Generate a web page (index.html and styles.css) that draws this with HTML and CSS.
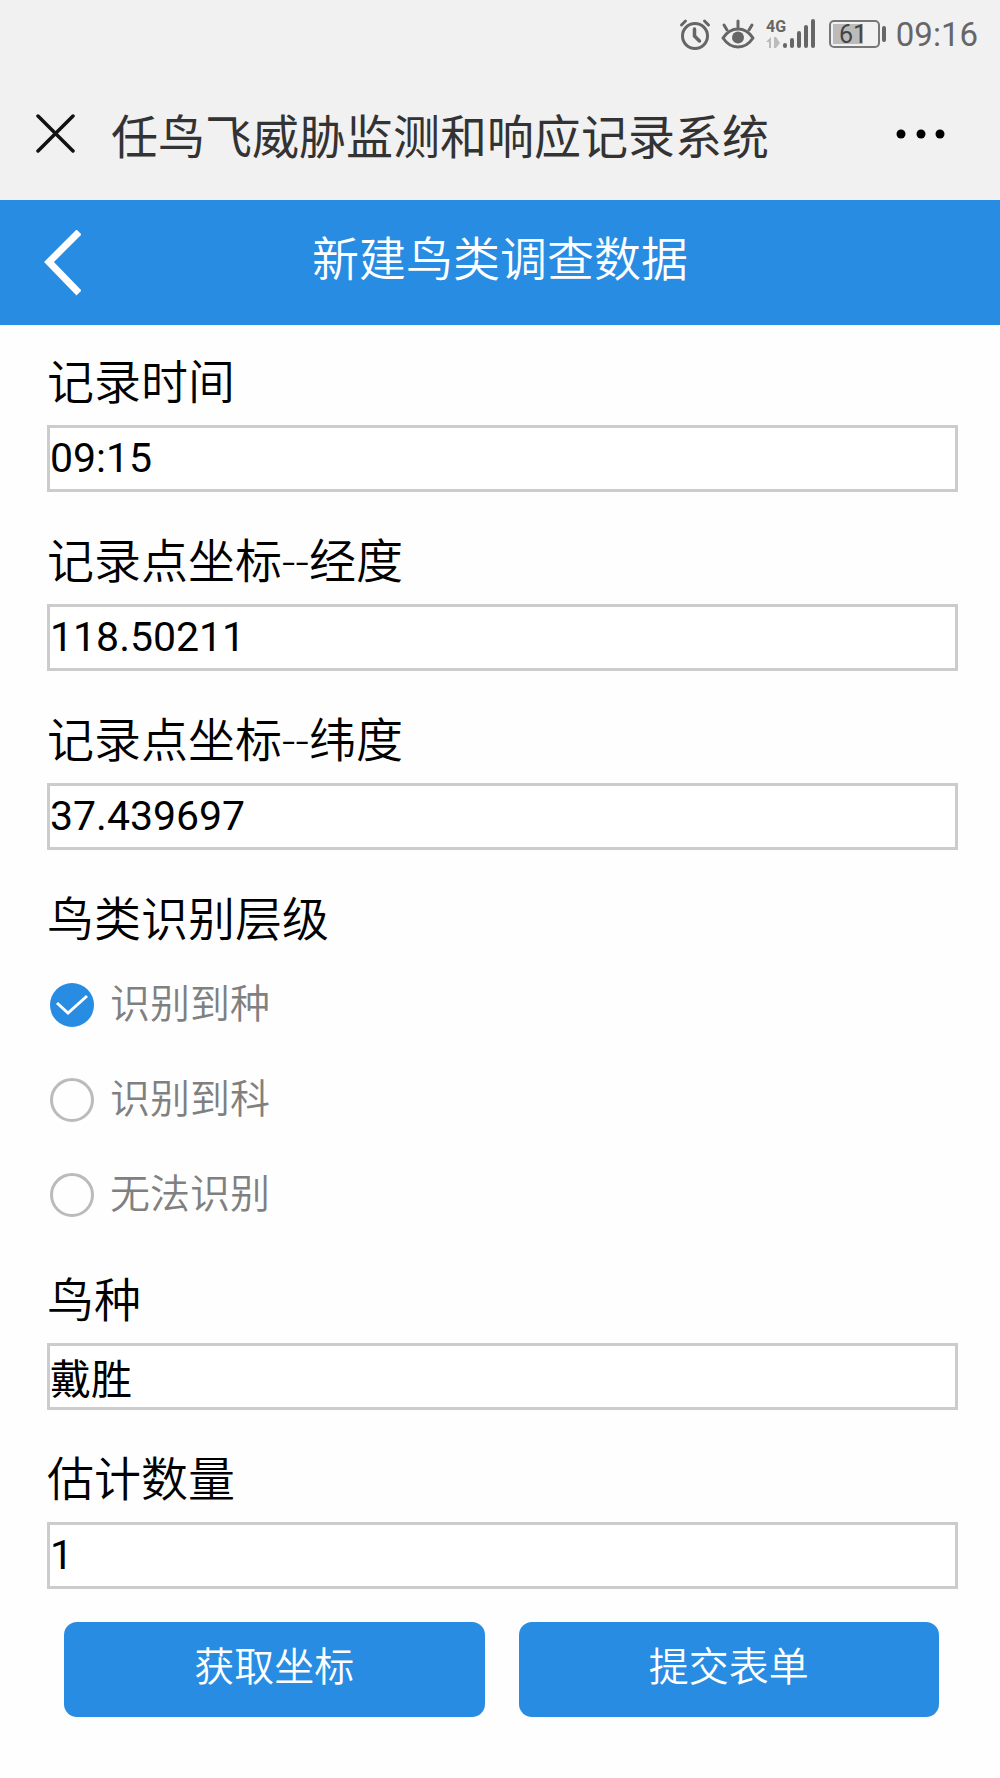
FILE: index.html
```html
<!DOCTYPE html>
<html lang="zh-CN">
<head>
  <meta charset="utf-8">
  <meta name="viewport" content="width=device-width, initial-scale=1">
  <title>任鸟飞威胁监测和响应记录系统</title>
  <link rel="stylesheet" href="styles.css">
</head>
<body>

<!-- status bar -->
<div class="status-bar">
  <svg class="alarm" width="32" height="32" viewBox="0 0 32 32" fill="none" stroke="#666" stroke-width="3" stroke-linecap="round">
    <circle cx="16" cy="18" r="12.5"/>
    <path d="M15.500 11v7l5 5" stroke-width="3.500"/>
    <path d="M2.500 7l4-4M29.500 7l-4-4"/>
  </svg>
  <svg class="eye" width="34" height="32" viewBox="0 0 34 32" fill="none" stroke="#666" stroke-width="3" stroke-linecap="round">
    <path d="M2 20C10 8 24 8 32 20C24 32 10 32 2 20z" stroke-linejoin="round"/>
    <circle cx="17" cy="19.500" r="6" fill="#666" stroke="none"/>
    <path d="M17 3v6M3 7l3 5M31 7l-3 5"/>
  </svg>
  <svg class="signal" width="50" height="34" viewBox="0 0 50 34">
    <text class="signal-text" x="0" y="15">4G</text>
    <path d="M0 25l5-5v11H3v-6zM8 20h2l4 6-4 5H8z" fill="#bbb"/>
    <path d="M19 28v1M26 23v6M33 16v13M40 10v19M47 4v25" stroke="#666" stroke-width="4" stroke-linecap="round"/>
  </svg>
  <svg class="battery" width="58" height="28" viewBox="0 0 58 28">
    <rect x="1" y="1" width="49" height="26" rx="4" fill="none" stroke="#777" stroke-width="2"/>
    <rect x="4" y="4" width="30" height="20" fill="#bbb"/>
    <path d="M55 8v12" stroke="#666" stroke-width="4" stroke-linecap="round"/>
    <text class="battery-text" x="24" y="23" text-anchor="middle">61</text>
  </svg>
  <span class="clock">09:16</span>
</div>

<!-- browser title -->
<div class="title-bar">
  <button class="icon-btn" type="button" aria-label="关闭">
    <svg width="40" height="40" viewBox="0 0 40 40" stroke="#111" stroke-width="3.500" stroke-linecap="round">
      <path d="M3 2l35 35M38 2L3 37"/>
    </svg>
  </button>
  <div class="title">任鸟飞威胁监测和响应记录系统</div>
  <button class="icon-btn" type="button" aria-label="更多">
    <svg width="50" height="10" viewBox="0 0 50 10">
      <circle cx="5" cy="5" r="4.500"/>
      <circle cx="25" cy="5" r="4.500"/>
      <circle cx="44" cy="5" r="4.500"/>
    </svg>
  </button>
</div>

<!-- page header -->
<div class="header">
  <button class="icon-btn" type="button" aria-label="返回">
    <svg width="38" height="66" viewBox="0 0 38 66" fill="none" stroke="#fff" stroke-width="7">
      <path d="M36 2L6 32l30 31"/>
    </svg>
  </button>
  <h1>新建鸟类调查数据</h1>
</div>

<form class="form">
  <div class="field">
    <label for="time">记录时间</label>
    <input type="text" id="time" value="09:15">
  </div>
  <div class="field">
    <label for="lng">记录点坐标--经度</label>
    <input type="text" id="lng" value="118.50211">
  </div>
  <div class="field">
    <label for="lat">记录点坐标--纬度</label>
    <input type="text" id="lat" value="37.439697">
  </div>

  <fieldset class="levels">
    <legend>鸟类识别层级</legend>
    <label class="radio"><input type="radio" name="level" value="1" checked><span>识别到种</span></label>
    <label class="radio"><input type="radio" name="level" value="2"><span>识别到科</span></label>
    <label class="radio"><input type="radio" name="level" value="3"><span>无法识别</span></label>
  </fieldset>

  <div class="field">
    <label for="species">鸟种</label>
    <input type="text" id="species" value="戴胜">
  </div>
  <div class="field">
    <label for="amount">估计数量</label>
    <input type="text" id="amount" value="1">
  </div>

  <div class="buttons">
    <button type="button">获取坐标</button>
    <button type="button">提交表单</button>
  </div>
</form>

</body>
</html>
```

FILE: styles.css
```css
* {
  box-sizing: border-box;
}
body {
  margin: 0;
  background-color: #fefefe;
  color: #000;
  font-family: Roboto, "Noto Sans CJK SC", sans-serif;
  font-weight: 350;
}
button, input {
  font-family: inherit;
  font-weight: inherit;
}
svg {
  display: block;
}

/* status bar */
.status-bar {
  display: flex;
  justify-content: flex-end;
  align-items: center;
  height: 68px;
  padding-right: 22px;
  background-color: #f1f1f1;
  color: #666;
  font-weight: 400;
}
.eye {
  margin-left: 10px;
}
.signal {
  margin-left: 11px;
  overflow: visible;
}
.battery {
  margin-left: 13px;
}
.signal-text {
  font-size: 16px;
  font-weight: 700;
  fill: #666;
}
.battery-text {
  font-size: 25px;
  fill: #444;
}
.clock {
  margin-left: 9px;
  font-size: 33px;
}

/* title bar */
.title-bar {
  display: flex;
  align-items: center;
  height: 132px;
  padding: 0 54px 0 35px;
  background-color: #f1f1f1;
}
.title {
  flex: 1;
  padding: 0 0 2px 36px;
  color: #333;
  font-size: 47px;
  font-weight: 400;
}
.icon-btn {
  padding: 0;
  border: 0;
  background: none;
}

/* header */
.header {
  display: grid;
  grid-template-columns: 1fr auto 1fr;
  align-items: center;
  height: 125px;
  padding: 0 43px;
  background-color: #288ce3;
  color: #fff;
}
.header .icon-btn {
  justify-self: start;
}
.header h1 {
  margin: 0;
  padding-bottom: 14px;
  font-size: 47px;
  font-weight: inherit;
}

/* form */
.form {
  padding: 21px 42px 0 47px;
}
.field {
  margin-bottom: 33px;
}
.field label, .levels legend {
  display: block;
  padding: 0;
  font-size: 47px;
  line-height: 74px;
}
.field input {
  display: block;
  width: 100%;
  height: 67px;
  margin-top: 5px;
  padding: 0 0 2px;
  border: 3px solid #ccc;
  border-radius: 0;
  background-color: #fff;
  color: #000;
  font-size: 41px;
  font-weight: 400;
}

/* radio list */
.levels {
  margin: 0 0 22px;
  padding: 0;
  border: 0;
}
.radio {
  display: flex;
  align-items: center;
  gap: 16px;
  height: 95px;
  padding-left: 3px;
  color: #808080;
  font-size: 40px;
}
.radio span {
  padding-bottom: 8px;
}
.radio input {
  appearance: none;
  width: 44px;
  height: 44px;
  margin: 0;
  border: 3px solid #bbb;
  border-radius: 50%;
}
.radio input:checked {
  border: 0;
  background: #288ce3 url("data:image/svg+xml,%3Csvg xmlns='http://www.w3.org/2000/svg' viewBox='0 0 44 44'%3E%3Cpath d='M7 20l11 10 19-17' fill='none' stroke='white' stroke-width='3'/%3E%3C/svg%3E");
}

/* bottom buttons */
.buttons {
  display: flex;
  gap: 34px;
  padding: 0 19px 0 17px;
}
.buttons button {
  flex: 1;
  height: 95px;
  padding: 0 0 12px;
  border: 0;
  border-radius: 13px;
  background-color: #288ce3;
  color: #fff;
  font-size: 40px;
}
```
